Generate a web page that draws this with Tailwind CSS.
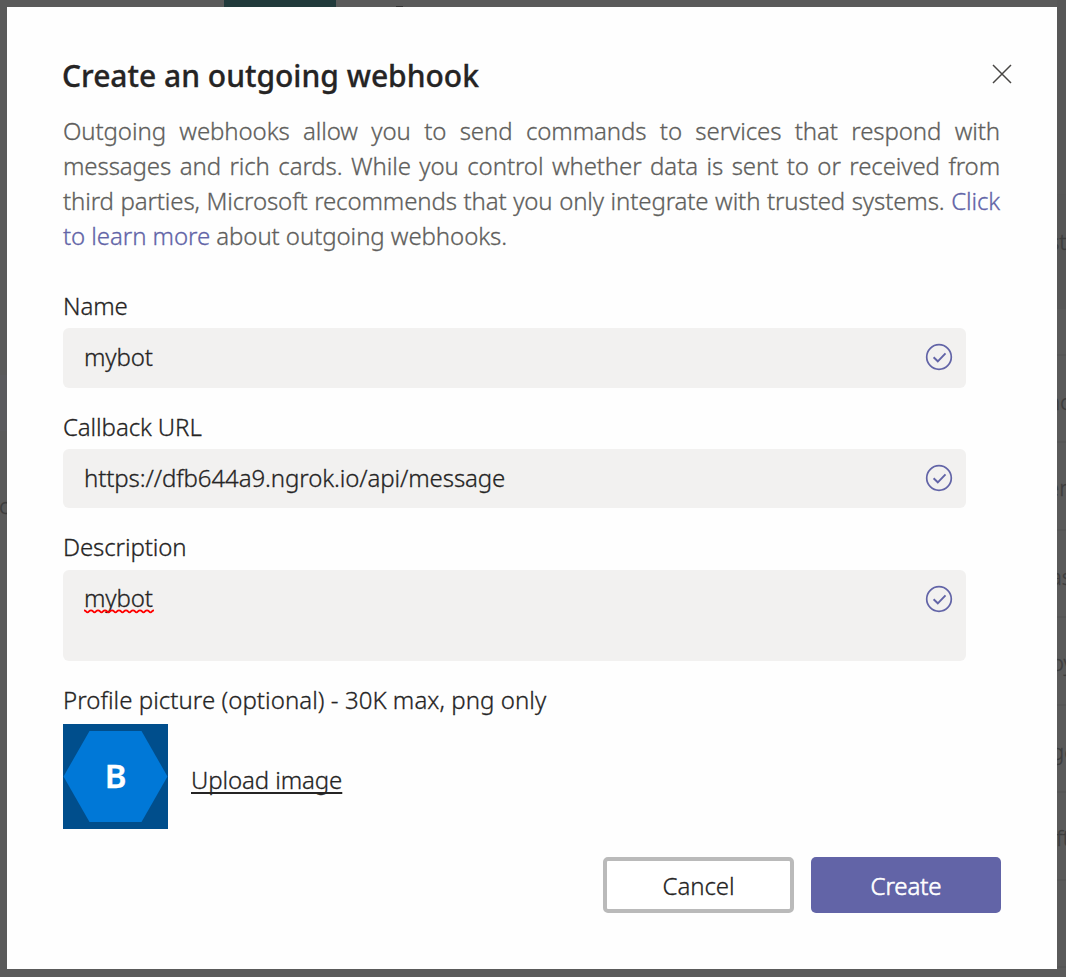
<!DOCTYPE html>
<html lang="en">
<head>
<meta charset="utf-8">
<title>Create an outgoing webhook</title>
<script src="https://cdn.jsdelivr.net/npm/@tailwindcss/browser@4"></script>
</head>
<body class="relative h-[977px] w-[1066px] overflow-hidden bg-[#5a5a5a] p-[7px] font-['Noto_Sans',sans-serif] text-[24px] font-light leading-[35px] text-[#252424] [-webkit-text-stroke:0.3px]">
  <!-- dimmed page behind the dialog -->
  <div class="absolute inset-0 overflow-hidden text-[#3d3d3d]" aria-hidden="true">
    <div class="absolute left-[224px] top-0 h-[7px] w-28 bg-[#213a3b]"></div>
    <div class="absolute left-[396px] top-[6px] h-px w-[7px] bg-[#333]"></div>
    <div class="absolute left-0 top-[375px] h-14 w-[7px] bg-[#5b5b5e]"></div>
    <div class="absolute -left-[1px] top-[488px] w-2 overflow-hidden text-[22px]">c</div>
    <div class="absolute right-0 top-0 flex h-full w-[9px] flex-col overflow-hidden bg-[#5a5a5a] text-[22px]">
      <div class="flex h-[195px] shrink-0 border-b border-[#555] bg-[#575757]"></div>
      <div class="flex h-[114px] shrink-0 bg-[#565656] pt-[29px]"><span class="-ml-[8px]">st</span></div>
      <div class="h-[47px] shrink-0 border-b-2 border-[#555]"></div>
      <div class="flex h-[87px] shrink-0 items-center border-b-2 border-[#555] pt-[5px]"><span class="-ml-[10px]">nc</span></div>
      <div class="flex h-[88px] shrink-0 items-center border-b-2 border-[#555] pt-[3px]"><span class="-ml-[10px]">er</span></div>
      <div class="flex h-[87px] shrink-0 items-center border-b-2 border-[#555] pt-[5px]"><span class="-ml-[7px]">as</span></div>
      <div class="flex h-[88px] shrink-0 items-center border-b-2 border-[#555] pt-[3px]"><span class="-ml-[6px]">oy</span></div>
      <div class="flex h-[87px] shrink-0 items-center border-b-2 border-[#555] pt-[5px]"><span class="-ml-[6px]">ge</span></div>
      <div class="flex h-[88px] shrink-0 items-center border-b-2 border-[#555] pt-[3px]"><span class="-ml-[1px]">ft</span></div>
      <div class="h-[87px] shrink-0 border-b-2 border-[#555]"></div>
    </div>
  </div>

  <main class="relative flex h-[962px] w-[1050px] flex-col bg-[#fefefe] px-14 pt-[49px]" role="dialog">
    <header class="flex h-10 items-center justify-between">
      <h1 class="-ml-px whitespace-nowrap text-[30px] font-medium leading-10">Create an outgoing webhook</h1>
      <button class="-mr-[11px] -mt-1" aria-label="Close">
        <svg class="block size-5" viewBox="0 0 20 20" fill="none" stroke="#484644" stroke-width="1.5"><path d="M1 1l18 18M19 1L1 19"/></svg>
      </button>
    </header>
    <div class="mt-[17px] w-[937px] whitespace-nowrap text-[#605e5c]">
      <p class="tracking-[-0.1px] [text-align-last:justify]">Outgoing webhooks allow you to send commands to services that respond with</p>
      <p class="tracking-[-0.1px] [text-align-last:justify]">messages and rich cards. While you control whether data is sent to or received from</p>
      <p class="tracking-[-0.12px] [text-align-last:justify]">third parties, Microsoft recommends that you only integrate with trusted systems. <a class="text-[#6264a7]">Click</a></p>
      <p class="tracking-[-0.08px]"><a class="text-[#6264a7]">to learn more</a> about outgoing webhooks.</p>
    </div>

    <form class="flex w-[903px] flex-col tracking-[-0.1px]">
      <label class="mt-[35px]">Name</label>
      <div class="mt-[5px] flex h-[60px] items-center justify-between rounded-md bg-[#f2f1f0] pl-[21px] pr-[13px]">
        <span class="-mt-[3px]">mybot</span>
        <svg class="-mt-[2px] size-7" viewBox="0 0 28 28" fill="none" stroke="#6264a7" stroke-width="1.7"><circle cx="14" cy="14" r="12.3"/><path d="M8.6 14.2l4.2 4.1 7.7-7.9" stroke-width="1.9"/></svg>
      </div>
      <label class="mt-[21px]">Callback URL</label>
      <div class="mt-[5px] flex h-[59px] items-center justify-between rounded-md bg-[#f2f1f0] pl-[21px] pr-[13px]">
        <span class="-mt-[2px]">https://dfb644a9.ngrok.io/api/message</span>
        <svg class="-mt-[2px] size-7" viewBox="0 0 28 28" fill="none" stroke="#6264a7" stroke-width="1.7"><circle cx="14" cy="14" r="12.3"/><path d="M8.6 14.2l4.2 4.1 7.7-7.9" stroke-width="1.9"/></svg>
      </div>
      <label class="mt-[21px]">Description</label>
      <div class="mt-[6px] flex h-[91px] items-start justify-between rounded-md bg-[#f2f1f0] pl-[21px] pr-[13px] pt-[10px]">
        <div class="relative">
          <span>mybot</span>
          <svg class="absolute left-0 top-[29px] h-[5px] w-[70px]" viewBox="0 0 70 5" fill="none" stroke="#f00" stroke-width="1.8"><path d="M0 1.3C2 1.3 2 3.300 3.500 3.300S5 1.300 7 1.300 9 3.300 10.500 3.300 12 1.300 14 1.300 16 3.300 17.500 3.300 19 1.300 21 1.300 23 3.300 24.500 3.300 26 1.300 28 1.300 30 3.300 31.500 3.300 33 1.300 35 1.300 37 3.300 38.500 3.300 40 1.300 42 1.300 44 3.300 45.500 3.300 47 1.300 49 1.300 51 3.300 52.500 3.300 54 1.300 56 1.300 58 3.300 59.500 3.300 61 1.300 63 1.300 65 3.300 66.500 3.300 68 1.300 70 1.300"/></svg>
        </div>
        <svg class="mt-[5px] size-7" viewBox="0 0 28 28" fill="none" stroke="#6264a7" stroke-width="1.7"><circle cx="14" cy="14" r="12.3"/><path d="M8.6 14.2l4.2 4.1 7.7-7.9" stroke-width="1.9"/></svg>
      </div>
      <label class="mt-[21px] tracking-[0.05px]">Profile picture (optional) - 30K max, png only</label>
      <div class="mt-[7px] flex items-center">
        <div class="grid size-[105px] place-items-center bg-[#004e8c]">
          <svg class="col-start-1 row-start-1 size-[105px]" viewBox="0 0 105 105"><path d="M.5 52.5L26.5 7h52l26 45.500-26 45.500h-52z" fill="#0078d7"/></svg>
          <span class="col-start-1 row-start-1 -mt-[2px] text-[33px] font-semibold leading-none text-white">B</span>
        </div>
        <a class="ml-[23px] mt-[5px] underline decoration-2 underline-offset-[3px] [text-decoration-skip-ink:none]">Upload image</a>
      </div>
    </form>

    <footer class="mt-7 flex w-[938px] justify-end gap-[17px] tracking-[-0.1px]">
      <button class="h-14 w-[191px] rounded-[5px] border-4 border-[#bababa] bg-white">Cancel</button>
      <button class="h-14 w-[190px] rounded-[5px] bg-[#6264a7] text-white [-webkit-text-stroke:0.6px]">Create</button>
    </footer>
  </main>
</body>
</html>
